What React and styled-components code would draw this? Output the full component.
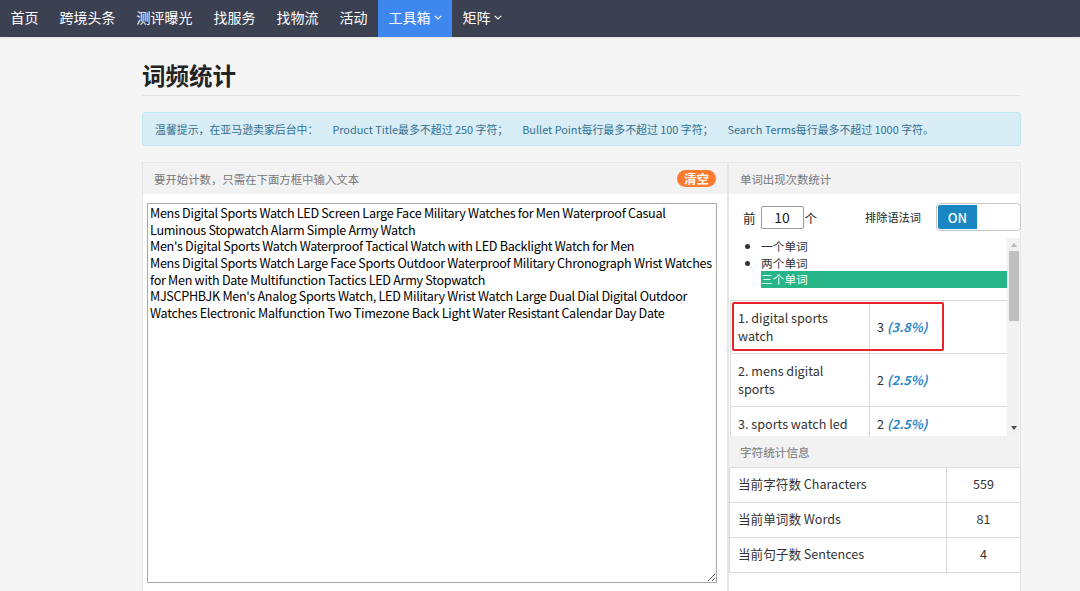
import React from 'react';
import styled, { createGlobalStyle } from 'styled-components';

const FONT = `"Noto Sans CJK SC", "Noto Sans", sans-serif`;

const Global = createGlobalStyle`
  html, body { margin: 0; padding: 0; background: #f5f5f5; font-family: ${FONT}; color: #333; }
  * { box-sizing: border-box; }
`;

const NavBar = styled.nav`
  height: 37px;
  background: #3b4151;
  display: flex;
  align-items: stretch;
  box-shadow: 0 1px 2px rgba(0, 0, 0, 0.08);
`;

const NavItem = styled.a`
  display: flex;
  align-items: center;
  gap: 3px;
  padding: 0 10.5px 3px;
  color: #fff;
  font-size: 14px;
  text-decoration: none;
  background: ${(p) => (p.$active ? '#3e87ef' : 'transparent')};
`;

const Chevron = () => (
  <svg width="8" height="5" viewBox="0 0 8 5">
    <polyline points="0.8,0.8 4,4 7.2,0.8" fill="none" stroke="#fff" strokeWidth="1.2" />
  </svg>
);

const Main = styled.main`
  width: 879px;
  margin-left: 142px;
`;

const Title = styled.h1`
  margin: 23px 0 0;
  padding-bottom: 5px;
  font-size: 23.5px;
  line-height: 30px;
  font-weight: 700;
  color: #222;
  border-bottom: 1px solid #e4e4e4;
`;

const Alert = styled.div`
  margin-top: 16px;
  height: 34px;
  display: flex;
  align-items: center;
  gap: 14px;
  padding: 0 12px;
  background: #d9edf7;
  border: 1px solid #bce8f1;
  border-radius: 3px;
  color: #31708f;
  font-size: 10.9px;
`;

const Panels = styled.section`
  margin-top: 16px;
  display: flex;
  height: 440px;
`;

const Panel = styled.div`
  display: flex;
  flex-direction: column;
  width: ${(p) => p.$width}px;
  border: 1px solid #e6e6e6;
  background: #fff;
  position: relative;
`;

const PanelHeader = styled.div`
  height: 31px;
  flex: none;
  display: flex;
  align-items: center;
  justify-content: space-between;
  padding: 0 11px 0 11px;
  background: #f2f2f3;
  color: #777;
  font-size: 11.4px;
`;

const ClearButton = styled.button`
  border: none;
  background: #fd7b2f;
  color: #fff;
  font-family: ${FONT};
  font-size: 12.5px;
  font-weight: 700;
  height: 17px;
  padding: 0 7px;
  border-radius: 9px;
  line-height: 17px;
`;

const TextArea = styled.textarea`
  margin: 9px 0 0 4px;
  width: 570px;
  height: 380px;
  padding: 1px 2px;
  border: 1px solid #a9a9a9;
  font-family: ${FONT};
  font-size: 12.6px;
  letter-spacing: -0.3px;
  line-height: 16.67px;
  color: #000;
  background: #fff;
  outline: none;
`;

const Controls = styled.div`
  margin-top: 9px;
  height: 28px;
  display: flex;
  align-items: center;
  padding-left: 14px;
  font-size: 12.6px;
  color: #222;
`;

const CountInput = styled.input`
  width: 43px;
  height: 23px;
  margin: 0 1px 0 5px;
  border: 1px solid #9a9a9a;
  border-radius: 2px;
  text-align: center;
  font-family: ${FONT};
  font-size: 14px;
  color: #222;
  padding: 0;
`;

const ExcludeLabel = styled.span`
  margin-left: auto;
  margin-right: 15px;
  font-size: 11.2px;
`;

const Toggle = styled.div`
  width: 85px;
  height: 28px;
  margin-right: -1px;
  border: 1px solid #c9c9c9;
  border-radius: 4px;
  padding: 1px;
  display: flex;
  background: #fff;
`;

const ToggleOn = styled.span`
  width: 39px;
  background: #1a86c3;
  color: #fff;
  font-weight: 500;
  font-size: 13px;
  display: flex;
  align-items: center;
  justify-content: center;
  border-radius: 2px 0 0 2px;
`;

const ScrollArea = styled.div`
  margin-top: 7px;
  height: 198px;
  display: flex;
`;

const ScrollContent = styled.div`
  flex: 1;
  overflow: hidden;
  position: relative;
`;

const Track = styled.div`
  width: 13px;
  background: #f1f1f1;
  display: flex;
  flex-direction: column;
  align-items: center;
  padding: 5px 0 6px;
`;

const Arrow = styled.span`
  width: 0;
  height: 0;
  border-left: 3.5px solid transparent;
  border-right: 3.5px solid transparent;
  ${(p) => (p.$down ? 'border-top: 4px solid #505050; margin-top: auto;' : 'border-bottom: 4px solid #b4b4b4;')}
  flex: none;
`;

const Thumb = styled.span`
  width: 10px;
  height: 70px;
  margin-top: 4px;
  background: #bfbfbf;
  flex: none;
`;

const WordList = styled.ul`
  margin: 0;
  padding: 0 0 0 32px;
  font-size: 11.7px;
  line-height: 16.5px;
  color: #333;
`;

const WordItem = styled.li`
  list-style: ${(p) => (p.$selected ? 'none' : 'disc')};
  background: ${(p) => (p.$selected ? '#27b487' : 'transparent')};
  color: ${(p) => (p.$selected ? '#fff' : '#333')};
`;

const TableWrap = styled.div`
  position: relative;
  margin: 12px 0 0 1px;
`;

const FreqTable = styled.table`
  width: 279px;
  border-collapse: collapse;
  table-layout: fixed;
  font-size: 12.6px;
  line-height: 18px;
  color: #333;
  td {
    border: 1px solid #dcdcdc;
    padding: 8px 7px;
    vertical-align: middle;
  }
`;

const Pct = styled.em`
  color: #2d88c9;
  font-weight: 600;
  margin-left: 3px;
`;

const Highlight = styled.div`
  position: absolute;
  left: 2px;
  top: 2px;
  width: 212px;
  height: 49px;
  border: 2px solid #e8232b;
  border-radius: 2px;
  pointer-events: none;
`;

const SubHeader = styled(PanelHeader)`
  color: #888;
  font-size: 11.6px;
  font-weight: 500;
`;

const StatTable = styled.table`
  width: calc(100% + 1px);
  border-collapse: collapse;
  table-layout: fixed;
  font-size: 12.6px;
  color: #333;
  td {
    height: 35px;
    border: 1px solid #dcdcdc;
    padding: 0 8px 3px;
  }
  td:last-child {
    text-align: center;
    width: 74px;
  }
`;

const TEXT = `Mens Digital Sports Watch LED Screen Large Face Military Watches for Men Waterproof Casual Luminous Stopwatch Alarm Simple Army Watch
Men's Digital Sports Watch Waterproof Tactical Watch with LED Backlight Watch for Men
Mens Digital Sports Watch Large Face Sports Outdoor Waterproof Military Chronograph Wrist Watches for Men with Date Multifunction Tactics LED Army Stopwatch
MJSCPHBJK Men's Analog Sports Watch, LED Military Wrist Watch Large Dual Dial Digital Outdoor Watches Electronic Malfunction Two Timezone Back Light Water Resistant Calendar Day Date`;

const NAV = ['首页', '跨境头条', '测评曝光', '找服务', '找物流', '活动'];

const ROWS = [
  ['1. digital sports watch', '3', '(3.8%)'],
  ['2. mens digital sports', '2', '(2.5%)'],
  ['3. sports watch led', '2', '(2.5%)'],
];

const STATS = [
  ['当前字符数 Characters', '559'],
  ['当前单词数 Words', '81'],
  ['当前句子数 Sentences', '4'],
];

export default function App() {
  return (
    <>
      <Global />
      <NavBar>
        {NAV.map((n) => (
          <NavItem key={n}>{n}</NavItem>
        ))}
        <NavItem $active>
          工具箱
          <Chevron />
        </NavItem>
        <NavItem>
          矩阵
          <Chevron />
        </NavItem>
      </NavBar>
      <Main>
        <Title>词频统计</Title>
        <Alert>
          <span>温馨提示，在亚马逊卖家后台中：</span>
          <span>Product Title最多不超过 250 字符；</span>
          <span>Bullet Point每行最多不超过 100 字符；</span>
          <span>Search Terms每行最多不超过 1000 字符。</span>
        </Alert>
        <Panels>
          <Panel $width={586}>
            <PanelHeader>
              <span>要开始计数，只需在下面方框中输入文本</span>
              <ClearButton>清空</ClearButton>
            </PanelHeader>
            <TextArea defaultValue={TEXT} spellCheck={false} />
          </Panel>
          <Panel $width={293}>
            <PanelHeader>单词出现次数统计</PanelHeader>
            <Controls>
              <span>前</span>
              <CountInput defaultValue="10" />
              <span>个</span>
              <ExcludeLabel>排除语法词</ExcludeLabel>
              <Toggle>
                <ToggleOn>ON</ToggleOn>
              </Toggle>
            </Controls>
            <ScrollArea>
              <ScrollContent>
                <WordList>
                  <WordItem>一个单词</WordItem>
                  <WordItem>两个单词</WordItem>
                  <WordItem $selected>三个单词</WordItem>
                </WordList>
                <TableWrap>
                  <FreqTable>
                    <tbody>
                      {ROWS.map(([w, c, p]) => (
                        <tr key={w}>
                          <td>{w}</td>
                          <td>
                            {c}
                            <Pct>{p}</Pct>
                          </td>
                        </tr>
                      ))}
                    </tbody>
                  </FreqTable>
                  <Highlight />
                </TableWrap>
              </ScrollContent>
              <Track>
                <Arrow />
                <Thumb />
                <Arrow $down />
              </Track>
            </ScrollArea>
            <SubHeader>字符统计信息</SubHeader>
            <StatTable>
              <tbody>
                {STATS.map(([k, v]) => (
                  <tr key={k}>
                    <td>{k}</td>
                    <td>{v}</td>
                  </tr>
                ))}
              </tbody>
            </StatTable>
          </Panel>
        </Panels>
      </Main>
    </>
  );
}
